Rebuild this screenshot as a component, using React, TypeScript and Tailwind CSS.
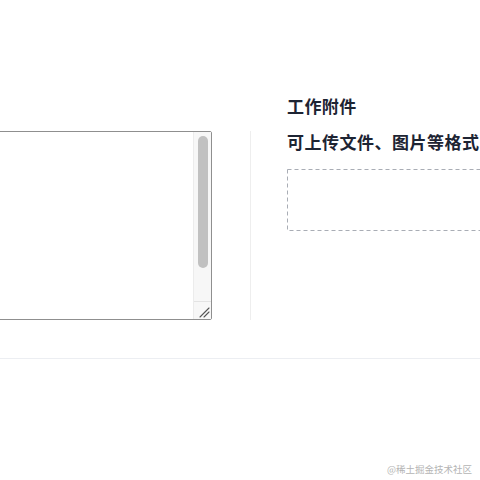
import React from 'react';

const cjk = { fontFamily: '"Noto Sans CJK SC", "Noto Sans", sans-serif' };

function FakeTextarea() {
  return (
    <div className="flex h-[189px] w-[232px] -ml-[20px] rounded-tr-[2px] rounded-br-[2px] border border-[#8f8f8f] bg-white">
      <div className="flex-1" />
      {/* scrollbar */}
      <div className="flex w-[18px] flex-col border-l border-[#ececec] bg-[#f7f7f7]">
        <div className="flex flex-1 justify-center pt-[4px]">
          <div className="h-[132px] w-[10px] rounded-full bg-[#c1c1c1]" />
        </div>
        <div className="relative h-[18px] border-t border-[#e3e3e3] bg-[#f7f7f7]">
          <svg className="absolute bottom-[1px] right-[1px]" width="11" height="11" viewBox="0 0 11 11">
            <path d="M1 10 L10 1 M5 10 L10 5" stroke="#555" strokeWidth="1.1" strokeLinecap="round" />
          </svg>
        </div>
      </div>
    </div>
  );
}

function UploadBox() {
  return (
    <div className="relative mt-[15px] h-[62px] w-[320px]">
      <svg className="absolute inset-0" width="320" height="62">
        <rect x="0.5" y="0.5" width="319" height="61" fill="none" stroke="#a9adb5" strokeDasharray="4 3" />
      </svg>
    </div>
  );
}

export default function App() {
  return (
    <div className="relative h-[480px] w-[480px] overflow-hidden bg-white" style={cjk}>
      <div className="border-b border-[#eceef2] pt-[94px] pb-[38px]">
        <div className="flex items-start">
          <div className="mt-[37px] flex h-[189px] w-[251px] shrink-0 border-r border-[#eeeeee]">
            <FakeTextarea />
          </div>
          <div className="shrink-0 pl-[36px]">
            <h3 className="h-[24px] whitespace-nowrap text-[17px] leading-[24px] font-semibold tracking-[0.4px] text-[#1d2433]">
              工作附件
            </h3>
            <p className="mt-[12px] whitespace-nowrap text-[17px] leading-[24px] font-semibold tracking-[0.5px] text-[#1d2433]">
              可上传文件、图片等格式
            </p>
            <UploadBox />
          </div>
        </div>
      </div>
      <span className="absolute bottom-[4px] right-[8px] text-[9.5px] leading-[14px] text-[#b4b4b4]">
        @稀土掘金技术社区
      </span>
    </div>
  );
}
